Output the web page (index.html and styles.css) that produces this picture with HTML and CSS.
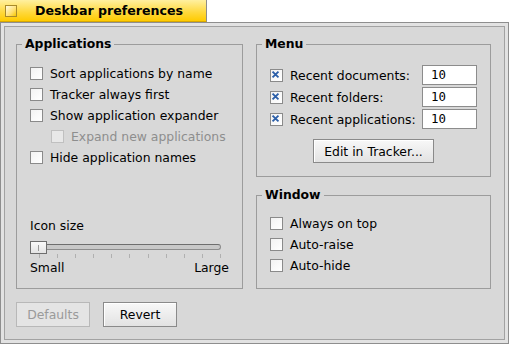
FILE: index.html
```html
<!DOCTYPE html>
<html lang="en">
<head>
    <meta charset="UTF-8">
    <meta name="viewport" content="width=device-width, initial-scale=1.0">
    <title>Deskbar preferences</title>
    <link rel="stylesheet" href="styles.css">
</head>
<body>

    <div class="window">
        <div class="tab">
            <span class="tab-icon"></span>
            <span class="tab-title">Deskbar preferences</span>
        </div>
        <div class="frame">
            <div class="content">
                <div class="groups">
                    <fieldset class="group apps">
                        <legend>Applications</legend>
                        <div class="check"><span class="box"></span>Sort applications by name</div>
                        <div class="check"><span class="box"></span>Tracker always first</div>
                        <div class="check"><span class="box"></span>Show application expander</div>
                        <div class="check sub disabled"><span class="box"></span>Expand new applications</div>
                        <div class="check"><span class="box"></span>Hide application names</div>

                        <div class="slider-block">
                            <div class="slider-title">Icon size</div>
                            <div class="slider">
                                <div class="track"></div>
                                <div class="thumb"><span class="grip"></span></div>
                            </div>
                            <div class="ticks">
                                <span></span><span></span><span></span><span></span>
                                <span></span><span></span><span></span><span></span>
                                <span></span><span></span><span></span>
                            </div>
                            <div class="slider-labels"><span>Small</span><span>Large</span></div>
                        </div>
                    </fieldset>

                    <div class="right-col">
                        <fieldset class="group menu">
                            <legend>Menu</legend>
                            <div class="menu-row">
                                <div class="check"><span class="box checked"><svg viewBox="0 0 13 13"><path d="M3 3 L10 10 M10 3 L3 10"/></svg></span>Recent documents:</div>
                                <div class="field">10</div>
                            </div>
                            <div class="menu-row">
                                <div class="check"><span class="box checked"><svg viewBox="0 0 13 13"><path d="M3 3 L10 10 M10 3 L3 10"/></svg></span>Recent folders:</div>
                                <div class="field">10</div>
                            </div>
                            <div class="menu-row">
                                <div class="check"><span class="box checked"><svg viewBox="0 0 13 13"><path d="M3 3 L10 10 M10 3 L3 10"/></svg></span>Recent applications:</div>
                                <div class="field">10</div>
                            </div>
                            <div class="center">
                                <button class="btn edit">Edit in Tracker...</button>
                            </div>
                        </fieldset>

                        <fieldset class="group win">
                            <legend>Window</legend>
                            <div class="check"><span class="box"></span>Always on top</div>
                            <div class="check"><span class="box"></span>Auto-raise</div>
                            <div class="check"><span class="box"></span>Auto-hide</div>
                        </fieldset>
                    </div>
                </div>

                <div class="actions">
                    <button class="btn" disabled>Defaults</button>
                    <button class="btn">Revert</button>
                </div>
            </div>
        </div>
    </div>

</body>
</html>
```

FILE: styles.css
```css
body {
    margin: 0;
    background-color: #fff;
    font-family: "DejaVu Sans", sans-serif;
    font-size: 12.4px;
    color: #000;
}
.window {
    width: 509px;
    height: 344px;
    display: flex;
    flex-direction: column;
}
.tab {
    width: 206px;
    height: 21px;
    display: flex;
    align-items: center;
    background: linear-gradient(#fff0a0, #ffd83a 60%, #ffcb00);
    border-right: 1px solid #8c8c8c;
    border-bottom: 1px solid #d8a800;
}
.tab-icon {
    width: 10px;
    height: 10px;
    margin-left: 5px;
    border: 1px solid #a88a2a;
    background: linear-gradient(135deg, #fffbe0, #ffe070 60%, #f7c800);
}
.tab-title {
    margin-left: 18px;
    font-weight: bold;
    font-size: 12.6px;
}
.frame {
    flex: 1;
    display: flex;
    border: 1px solid #8e8e8e;
    padding: 3px;
    background-color: #e2e2e2;
}
.content {
    flex: 1;
    border: 1px solid #a2a2a2;
    background-color: #d8d8d8;
    padding: 10px 11px 10px 11px;
}
.groups {
    display: grid;
    grid-template-columns: 227px 235px;
    gap: 13px;
}
.group {
    margin: 0;
    border: 1px solid #9c9c9c;
    padding: 12px 13px 13px 13px;
    min-width: 0;
}
.group legend {
    font-weight: bold;
    line-height: 14px;
    margin-left: -8px;
    padding: 0 3px;
}
.check {
    display: flex;
    align-items: center;
    height: 21px;
    gap: 7px;
    white-space: nowrap;
}
.box {
    width: 11px;
    height: 11px;
    border: 1px solid #8a8a8a;
    background: linear-gradient(135deg, #f2f2f2, #ffffff);
    flex: none;
}
.box svg {
    display: block;
    width: 11px;
    height: 11px;
    margin: -1px 0 0 -1px;
    overflow: visible;
}
.box svg path {
    stroke: #2b5ea8;
    stroke-width: 2.2;
    fill: none;
}
.check.sub {
    padding-left: 21px;
}
.check.disabled {
    color: #8e8e8e;
}
.check.disabled .box {
    border-color: #c0c0c0;
    background: #e8e8e8;
}
.slider-block {
    margin-top: 51px;
}
.slider-title {
    line-height: 14px;
}
.slider {
    position: relative;
    margin-top: 8px;
    height: 12px;
    width: 191px;
}
.track {
    position: absolute;
    left: 0;
    right: 0;
    top: 3px;
    height: 4px;
    border: 1px solid #8c8c8c;
    border-top-color: #6e6e6e;
    border-radius: 3px;
    background-color: #c8c8c8;
}
.thumb {
    position: absolute;
    left: 0;
    top: 0;
    width: 15px;
    height: 11px;
    border: 1px solid #6e6e6e;
    background: linear-gradient(#fafafa, #e4e4e4);
    display: flex;
    justify-content: center;
    align-items: center;
}
.grip {
    width: 1px;
    height: 6px;
    background-color: #9a9a9a;
}
.ticks {
    display: flex;
    justify-content: space-between;
    width: 182px;
    padding-left: 9px;
    margin-top: 1px;
    height: 4px;
}
.ticks span {
    width: 1px;
    height: 4px;
    background-color: #b0b0b0;
}
.slider-labels {
    display: flex;
    justify-content: space-between;
    margin-top: 3px;
    line-height: 14px;
    width: 199px;
}
.right-col {
    display: flex;
    flex-direction: column;
    gap: 11px;
}
.menu {
    padding-top: 13px;
}
.menu-row {
    display: flex;
    justify-content: space-between;
    align-items: center;
    height: 22px;
}
.field {
    width: 45px;
    height: 18px;
    border: 1px solid #8c8c8c;
    background-color: #fff;
    padding-left: 8px;
    font-family: "DejaVu Sans Mono", monospace;
    line-height: 18px;
}
.center {
    display: flex;
    justify-content: center;
    margin-top: 9px;
}
.win {
    flex: 1;
    padding-top: 11px;
    padding-bottom: 12px;
}
.btn {
    font-family: "DejaVu Sans", sans-serif;
    font-size: 12.4px;
    color: #000;
    width: 74px;
    height: 25px;
    padding: 0;
    border: 1px solid #8a8a8a;
    background: linear-gradient(#f8f8f8, #e2e2e2);
    box-shadow: inset 1px 1px 0 #fff;
}
.btn.edit {
    width: 121px;
    height: 24px;
}
.btn:disabled {
    color: #9a9a9a;
    border-color: #b8b8b8;
    background: #e4e4e4;
    box-shadow: none;
}
.actions {
    display: flex;
    gap: 13px;
    margin-top: 13px;
}
```
